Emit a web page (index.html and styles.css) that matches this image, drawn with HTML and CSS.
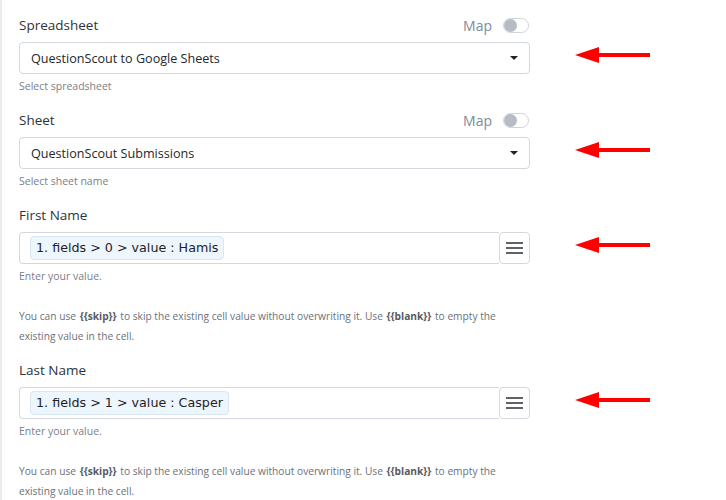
FILE: index.html
```html
<html>
  <head>
    <meta charset="UTF-8" />
    <link rel="stylesheet" href="styles.css">
  </head>
  <body>
    <div class="page">
      <div class="field">
        <div class="fieldLabel">
          <span>Spreadsheet</span>
          <span class="mapSwitch">Map <span class="toggle"><span class="knob"></span></span></span>
        </div>
        <div class="controlRow">
          <div class="select">
            <span>QuestionScout to Google Sheets</span>
            <span class="caret"></span>
          </div>
          <svg class="arrow" width="76" height="18" viewBox="0 0 76 18"><polygon points="0,9 24,1 24,7 75,7 75,11 24,11 24,17" fill="#ff0000" /></svg>
        </div>
        <div class="hint">Select spreadsheet</div>
      </div>

      <div class="field">
        <div class="fieldLabel">
          <span>Sheet</span>
          <span class="mapSwitch">Map <span class="toggle"><span class="knob"></span></span></span>
        </div>
        <div class="controlRow">
          <div class="select">
            <span>QuestionScout Submissions</span>
            <span class="caret"></span>
          </div>
          <svg class="arrow" width="76" height="18" viewBox="0 0 76 18"><polygon points="0,9 24,1 24,7 75,7 75,11 24,11 24,17" fill="#ff0000" /></svg>
        </div>
        <div class="hint">Select sheet name</div>
      </div>

      <div class="field">
        <div class="fieldLabel"><span>First Name</span></div>
        <div class="controlRow">
          <div class="mapInput">
            <div class="inputBox"><span class="chip">1. fields &gt; 0 &gt; value : Hamis</span></div>
            <div class="menuButton"><span></span><span></span><span></span></div>
          </div>
          <svg class="arrow" width="76" height="18" viewBox="0 0 76 18"><polygon points="0,9 24,1 24,7 75,7 75,11 24,11 24,17" fill="#ff0000" /></svg>
        </div>
        <div class="hint">Enter your value.</div>
        <p class="note">
          <span>You can use <b>{{skip}}</b> to skip the existing cell value without overwriting it. Use <b>{{blank}}</b> to empty the</span>
          <span>existing value in the cell.</span>
        </p>
      </div>

      <div class="field">
        <div class="fieldLabel"><span>Last Name</span></div>
        <div class="controlRow">
          <div class="mapInput">
            <div class="inputBox"><span class="chip">1. fields &gt; 1 &gt; value : Casper</span></div>
            <div class="menuButton"><span></span><span></span><span></span></div>
          </div>
          <svg class="arrow" width="76" height="18" viewBox="0 0 76 18"><polygon points="0,9 24,1 24,7 75,7 75,11 24,11 24,17" fill="#ff0000" /></svg>
        </div>
        <div class="hint">Enter your value.</div>
        <p class="note">
          <span>You can use <b>{{skip}}</b> to skip the existing cell value without overwriting it. Use <b>{{blank}}</b> to empty the</span>
          <span>existing value in the cell.</span>
        </p>
      </div>
    </div>
  </body>
</html>
```

FILE: styles.css
```css
body {
  margin: 0;
  background: #ffffff;
  font-family: 'Open Sans', sans-serif;
  color: #333333;
}
.page {
  border-left: 2px solid #e9edf2;
  min-height: 500px;
  padding: 15px 0 0 17px;
  box-sizing: border-box;
}
.field {
  width: 511px;
  margin-bottom: 17px;
}
.fieldLabel {
  display: flex;
  justify-content: space-between;
  align-items: center;
  height: 20px;
  font-size: 13.5px;
  color: #2d3339;
  margin-bottom: 7px;
}
.mapSwitch {
  display: flex;
  align-items: center;
  color: #7d8b99;
  font-size: 14px;
}
.toggle {
  display: inline-block;
  width: 24px;
  height: 13px;
  margin-left: 11px;
  margin-right: 1px;
  border: 1px solid #cfd4da;
  border-radius: 8px;
}
.knob {
  display: block;
  width: 13px;
  height: 13px;
  border-radius: 50%;
  background: #b5bcc4;
}
.controlRow {
  display: flex;
  align-items: center;
  width: 640px;
}
.arrow {
  flex: none;
  margin-left: 45px;
  margin-top: -6px;
}
.select {
  flex: none;
  width: 511px;
  height: 32px;
  box-sizing: border-box;
  border: 1px solid #d3d8de;
  border-radius: 4px;
  display: flex;
  align-items: center;
  justify-content: space-between;
  padding: 0 11px 0 11px;
  font-size: 12.6px;
  color: #23282d;
}
.caret {
  width: 0;
  height: 0;
  border-left: 4px solid transparent;
  border-right: 4px solid transparent;
  border-top: 4px solid #222222;
}
.mapInput {
  flex: none;
  width: 511px;
  display: flex;
}
.inputBox {
  flex: 1;
  height: 32px;
  box-sizing: border-box;
  border: 1px solid #d3d8de;
  border-right: none;
  border-radius: 4px 0 0 4px;
  display: flex;
  align-items: center;
  padding-left: 10px;
}
.chip {
  font-family: 'DejaVu Sans', sans-serif;
  font-size: 12.7px;
  color: #1e2226;
  background: #edf5fd;
  border: 1px solid #d9e6f4;
  border-radius: 4px;
  padding: 2px 5px;
  line-height: 18px;
}
.menuButton {
  width: 31px;
  height: 32px;
  box-sizing: border-box;
  border: 1px solid #d3d8de;
  border-radius: 4px;
  display: flex;
  flex-direction: column;
  justify-content: center;
  align-items: center;
  gap: 3px;
}
.menuButton span {
  display: block;
  width: 17px;
  height: 2px;
  background: #5f6368;
}
.hint {
  margin-top: 5px;
  font-size: 10.5px;
  line-height: 14px;
  color: #7a8087;
}
.note {
  margin: 23px 0 -3px 0;
  font-size: 10.2px;
  line-height: 20px;
  color: #6b7178;
}
.note span {
  display: block;
  white-space: nowrap;
}
.note b {
  color: #555b61;
  margin: 0 1px;
}
```
